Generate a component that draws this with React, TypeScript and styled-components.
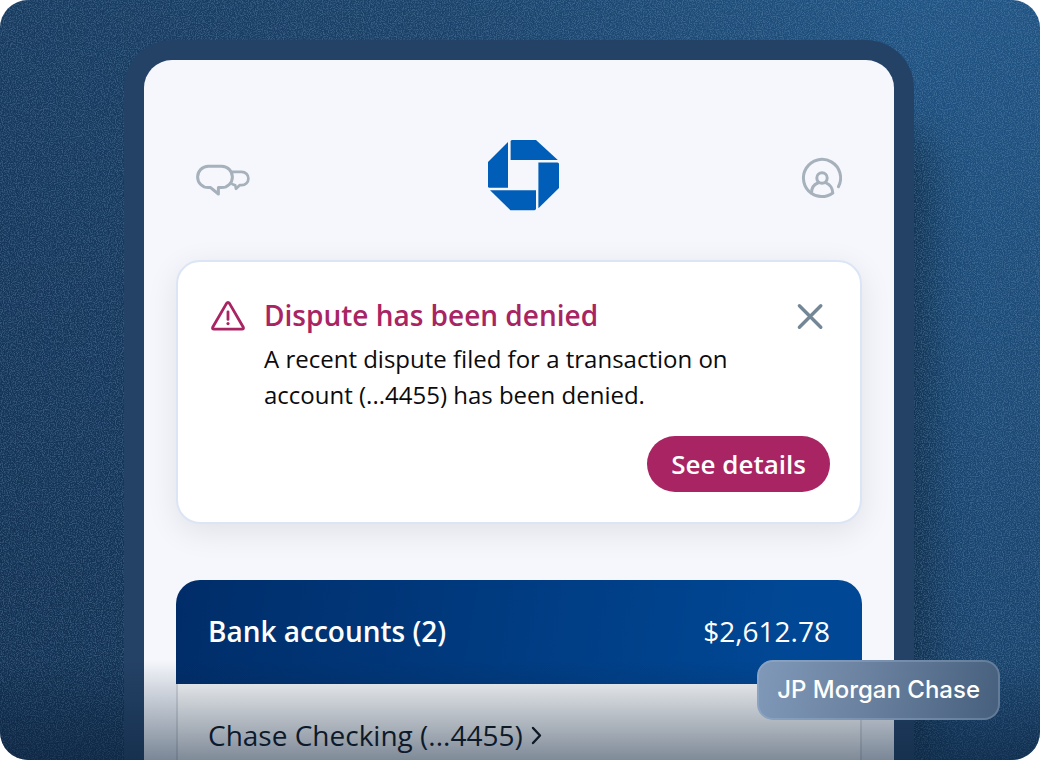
import React from "react";
import styled, { createGlobalStyle } from "styled-components";

const GlobalStyle = createGlobalStyle`
  *, *::before, *::after { box-sizing: border-box; }
  body { margin: 0; background: #ffffff; font-family: "Open Sans", "Noto Sans", sans-serif; }
  h1, h2, p { margin: 0; font-weight: 400; }
  button { border: 0; padding: 0; background: none; font: inherit; color: inherit; cursor: pointer; }
  svg { display: block; }
`;

const Scene = styled.main`
  position: relative;
  display: flex;
  min-height: 100vh;
  padding: 40px 126px 0 124px;
  border-radius: 28px;
  overflow: hidden;
  isolation: isolate;
  background:
    linear-gradient(180deg, rgba(8, 26, 52, 0) 0%, rgba(8, 26, 52, 0.34) 100%),
    linear-gradient(90deg, #173a5f 0%, #1a4168 40%, #205383 88%, #205383 100%);
`;

const Grain = styled.svg`
  position: absolute;
  inset: 0;
  width: 100%;
  height: 100%;
  z-index: 1;
  pointer-events: none;
`;

const Phone = styled.div`
  position: relative;
  z-index: 2;
  flex: 1;
  min-width: 0;
  padding: 20px 20px 0;
  border-radius: 48px 48px 0 0;
  background: #244266;
`;

const PhoneShadow = styled.div`
  position: absolute;
  z-index: 0;
  inset: 100px 126px 0 160px;
  border-radius: 48px;
  box-shadow: 16px 24px 40px rgba(12, 36, 58, 0.7);
`;

const Screen = styled.div`
  height: 100%;
  padding: 0 32px;
  border-radius: 28px 28px 0 0;
  background: #f5f7fc;
`;

const TopBar = styled.header`
  display: flex;
  align-items: center;
  justify-content: space-between;
  padding: 80px 16px 48px 20px;
  color: #a6b1bb;
`;

const AlertCard = styled.section`
  display: grid;
  grid-template-columns: 40px 1fr 40px;
  column-gap: 16px;
  padding: 34px 30px 30px;
  border: 2px solid #dbe5f6;
  border-radius: 24px;
  background: #ffffff;
  box-shadow: 0 8px 32px rgba(0, 0, 0, 0.09);
`;

const AlertTitle = styled.h1`
  font-size: 28px;
  line-height: 38px;
  font-weight: 600;
  color: #a82462;
`;

const AlertText = styled.p`
  grid-column: 2 / 3;
  margin-top: 5px;
  font-size: 24px;
  line-height: 36px;
  color: #0b0b0c;
`;

const DetailsButton = styled.button`
  grid-column: 1 / -1;
  justify-self: end;
  margin-top: 23px;
  padding: 8px 24px;
  border-radius: 28px;
  background: #a82462;
  color: #ffffff;
  font-size: 26px;
  line-height: 40px;
  font-weight: 600;
`;

const CloseButton = styled.button`
  color: #748797;
`;

const Accounts = styled.section`
  margin-top: 56px;
`;

const AccountsHeader = styled.div`
  display: flex;
  justify-content: space-between;
  padding: 32px 32px 34px;
  border-radius: 24px 24px 0 0;
  background: linear-gradient(100deg, #002d69 0%, #004896 90%);
  color: #ffffff;
  font-size: 28px;
  line-height: 38px;
`;

const AccountsTitle = styled.h2`
  font-size: 28px;
  font-weight: 600;
`;

const AccountRow = styled.a`
  display: flex;
  align-items: center;
  gap: 8px;
  padding: 32px 30px 6px;
  border: solid #dcdfe4;
  border-width: 0 2px;
  background: #ffffff;
  color: #10151c;
  font-size: 28px;
  line-height: 38px;
  text-decoration: none;
`;

const Fade = styled.div`
  position: absolute;
  z-index: 3;
  inset: auto 0 0 0;
  height: 100px;
  background: linear-gradient(180deg, rgba(10, 32, 58, 0) 0%, rgba(10, 32, 58, 0.52) 100%);
  pointer-events: none;
`;

const Tag = styled.p`
  position: absolute;
  z-index: 4;
  right: 40px;
  bottom: 40px;
  padding: 12px 18px;
  border: 2px solid rgba(170, 195, 225, 0.28);
  border-radius: 16px;
  background: linear-gradient(100deg, #8199b9 0%, #6a829f 45%, #465f7c 100%) border-box;
  color: #ffffff;
  font-family: Inter, sans-serif;
  font-size: 24px;
  line-height: 32px;
  font-weight: 500;
`;

const ChatIcon = () => (
  <svg width="54" height="40" viewBox="0 0 54 40" fill="none" stroke="currentColor" strokeWidth="3" strokeLinejoin="round" strokeLinecap="round">
    <path d="M12.3 10.2H25.7a10.7 10.7 0 0 1 0 21.4H22.4V38L14.6 31.6H12.3a10.7 10.7 0 0 1 0-21.4Z" />
    <path d="M36 15.8H45.7a6.7 6.7 0 0 1 0 13.4H43.6L40 32.8 39.2 29.2 36.4 28.2" strokeWidth="2.7" />
  </svg>
);

const BankLogo = () => (
  <svg width="72" height="72" viewBox="0 0 72 72" fill="#005eb8" role="img" aria-label="Chase">
    <path d="M24 0H48L69.8 20H22.6V1.6Q22.6 0 24 0Z" />
    <path d="M50.4 22.4H69.4Q71 22.4 71 24V48L50.4 68.2Z" />
    <path d="M2 50.2H48V68.6Q48 70.2 46.4 70.2H22.4Z" />
    <path d="M20 2V47.8H1.6Q0 47.8 0 46.2V22Z" />
  </svg>
);

const ProfileIcon = () => (
  <svg width="48" height="48" viewBox="0 0 48 48" fill="none" stroke="currentColor" strokeWidth="3" strokeLinecap="round" strokeLinejoin="round">
    <path d="M40.4 34.8A18.6 18.6 0 1 0 13.6 41.4C18.5 45.3 27.5 46.2 34.8 41C34.6 37 32.3 32.8 28.2 31" />
    <path d="M13.6 40.6C13.6 36.6 15.8 32.6 19.8 31" />
    <circle cx="24" cy="26" r="5.2" />
  </svg>
);

const WarningIcon = () => (
  <svg width="40" height="40" viewBox="0 0 40 40" fill="none" stroke="#a82462" strokeWidth="2.8" strokeLinejoin="round" aria-hidden="true">
    <path d="M18.4 7.6Q20 5.4 21.6 7.6L35.3 31.2Q36 33.2 34 33.2H6Q4 33.2 4.7 31.2Z" />
    <path d="M20 15.8V23.4" strokeLinecap="round" />
    <circle cx="20" cy="27.6" r="1.6" fill="#a82462" stroke="none" />
  </svg>
);

const CloseIcon = () => (
  <svg width="40" height="40" viewBox="0 0 40 40" fill="none" stroke="currentColor" strokeWidth="3.4" strokeLinecap="round">
    <path d="M9.4 9.8 30.8 31.2M30.8 9.8 9.4 31.2" />
  </svg>
);

const ChevronIcon = () => (
  <svg width="12" height="20" viewBox="0 0 12 20" fill="none" stroke="currentColor" strokeWidth="2.4" strokeLinecap="round" strokeLinejoin="round" aria-hidden="true">
    <path d="M2 3 9 10.5 2 18" />
  </svg>
);

export default function App() {
  return (
    <>
      <GlobalStyle />
      <Scene>
        <PhoneShadow />
        <Grain aria-hidden="true">
          <filter id="grain" x="0" y="0" width="100%" height="100%">
            <feTurbulence type="fractalNoise" baseFrequency="0.85" numOctaves="2" seed="4" />
            <feColorMatrix values="0 0 0 0 0.22  0 0 0 0 0.4  0 0 0 0 0.6  3.2 0 0 0 -1.3" />
          </filter>
          <rect width="100%" height="100%" filter="url(#grain)" opacity="0.3" />
        </Grain>
        <Phone>
          <Screen>
            <TopBar>
              <button type="button" aria-label="Messages"><ChatIcon /></button>
              <BankLogo />
              <button type="button" aria-label="Profile"><ProfileIcon /></button>
            </TopBar>
            <AlertCard>
              <WarningIcon />
              <AlertTitle>Dispute has been denied</AlertTitle>
              <CloseButton type="button" aria-label="Close"><CloseIcon /></CloseButton>
              <AlertText>A recent dispute filed for a transaction on account (...4455) has been denied.</AlertText>
              <DetailsButton type="button">See details</DetailsButton>
            </AlertCard>
            <Accounts>
              <AccountsHeader>
                <AccountsTitle>Bank accounts (2)</AccountsTitle>
                <span>$2,612.78</span>
              </AccountsHeader>
              <AccountRow href="#checking">
                Chase Checking (...4455)
                <ChevronIcon />
              </AccountRow>
            </Accounts>
          </Screen>
        </Phone>
        <Fade />
        <Tag>JP Morgan Chase</Tag>
      </Scene>
    </>
  );
}
